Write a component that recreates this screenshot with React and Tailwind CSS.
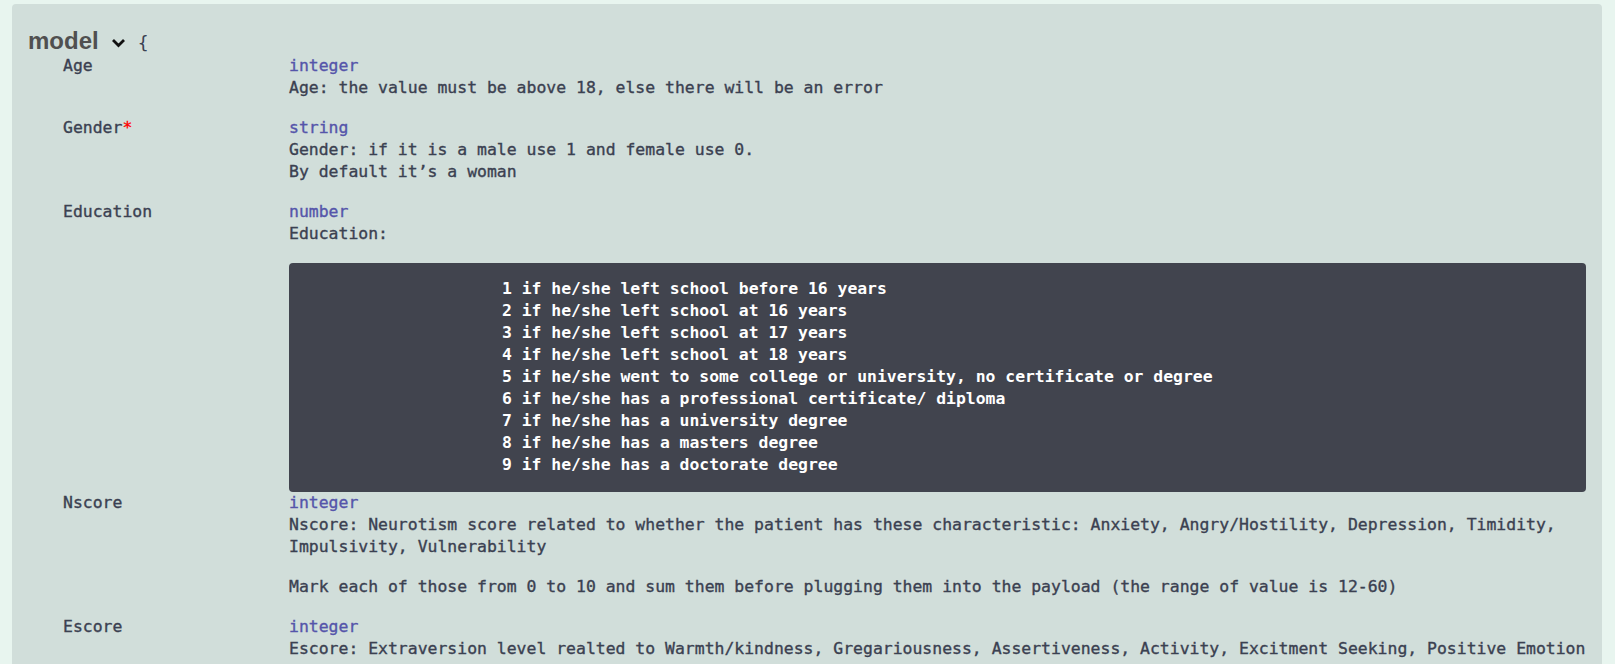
import React from "react";

const mono = { fontFamily: '"DejaVu Sans Mono", "Liberation Mono", monospace' };

const eduLines = [
  "1 if he/she left school before 16 years",
  "2 if he/she left school at 16 years",
  "3 if he/she left school at 17 years",
  "4 if he/she left school at 18 years",
  "5 if he/she went to some college or university, no certificate or degree",
  "6 if he/she has a professional certificate/ diploma",
  "7 if he/she has a university degree",
  "8 if he/she has a masters degree",
  "9 if he/she has a doctorate degree",
];

const Row = ({ name, required, type, children }) => (
  <div className="grid grid-cols-[226px_1fr]">
    <div className="leading-[22px]">
      {name}
      {required && <span className="text-[#ff0000]">*</span>}
    </div>
    <div>
      <div className="leading-[22px] text-[#55a]">{type}</div>
      {children}
    </div>
  </div>
);

const P = ({ children, last }) => (
  <p className={last ? "leading-[22px]" : "leading-[22px] mb-[18px]"}>{children}</p>
);

export default function App() {
  return (
    <div className="h-[664px] overflow-hidden bg-[#e8f5ef] pl-[12px] pr-[13px] pt-[4px]">
      <div className="rounded-[4px] bg-[#d1deda] pl-[16px] pr-[16px] pt-[23px] pb-[40px] text-[#3b4151]">
        {/* title */}
        <div className="flex items-center h-[28px]">
          <span
            className="text-[24px] leading-[28px] font-bold text-[#505050]"
            style={{ fontFamily: '"Liberation Sans", Arial, sans-serif' }}
          >
            model
          </span>
          <svg className="ml-[12px] mt-[3px]" width="15" height="10" viewBox="0 0 15 10">
            <path d="M2 2l5.5 5.5L13 2" fill="none" stroke="#111" strokeWidth="2.8" />
          </svg>
          <span className="ml-[12px] mt-[4px] text-[18px] leading-[22px]" style={mono}>
            {"{"}
          </span>
        </div>

        {/* properties */}
        <div className="pl-[35px] text-[16.45px] [-webkit-text-stroke:0.35px_currentColor]" style={mono}>
          <Row name="Age" type="integer">
            <P>Age: the value must be above 18, else there will be an error</P>
          </Row>
          <Row name="Gender" required type="string">
            <P>
              Gender: if it is a male use 1 and female use 0.
              <br />
              By default it’s a woman
            </P>
          </Row>
          <Row name="Education" type="number">
            <P>Education:</P>
            <div className="rounded-[4px] bg-[#41444e] pl-[213px] pr-[14px] pt-[15px] pb-[16px] text-white font-bold text-[16.4px] [-webkit-text-stroke:0px]">
              {eduLines.map((l) => (
                <div key={l} className="leading-[22px] whitespace-pre">
                  {l}
                </div>
              ))}
            </div>
          </Row>
          <Row name="Nscore" type="integer">
            <P>
              Nscore: Neurotism score related to whether the patient has these characteristic: Anxiety, Angry/Hostility, Depression, Timidity,
              <br />
              Impulsivity, Vulnerability
            </P>
            <P>
              Mark each of those from 0 to 10 and sum them before plugging them into the payload (the range of value is 12-60)
            </P>
          </Row>
          <Row name="Escore" type="integer">
            <P last>
              Escore: Extraversion level realted to Warmth/kindness, Gregariousness, Assertiveness, Activity, Excitment Seeking, Positive Emotion
            </P>
          </Row>
        </div>
      </div>
    </div>
  );
}
